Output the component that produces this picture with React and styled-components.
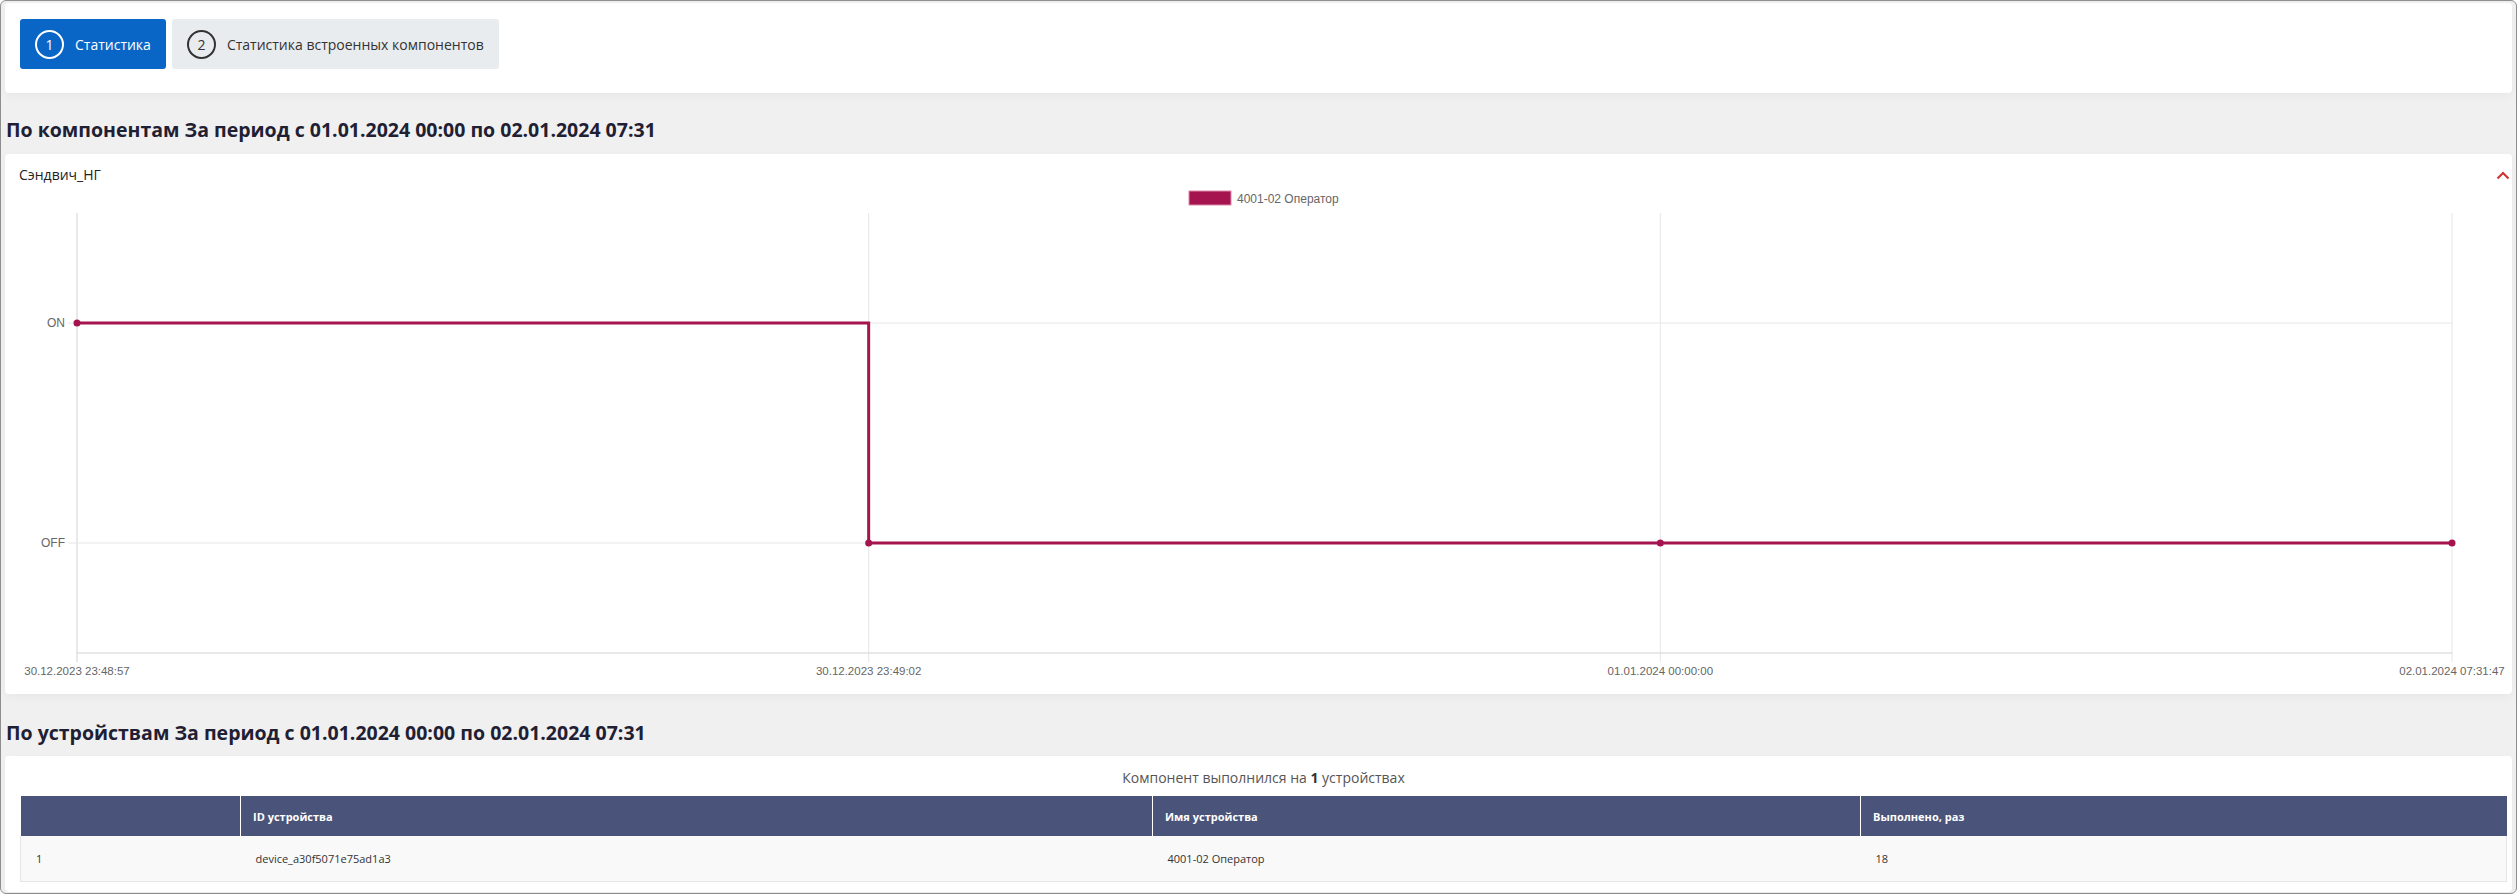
import styled, { createGlobalStyle } from "styled-components";

const GlobalStyle = createGlobalStyle`
    html, body {
        margin: 0;
        padding: 0;
        background: #ffffff;
    }
    body {
        font-family: "Open Sans", "Noto Sans", sans-serif;
    }
`

const palette = {
    blue: '#0a66c6',
    tabGray: '#e9ecef',
    bg: '#f0f0f0',
    line: '#a6144f',
    head: '#4a5379',
    grid: '#e6e6e6',
    axis: '#d2d2d2',
    tick: '#666666',
}

// рамка окна
const Frame = styled.div`
    width: 2517px;
    height: 894px;
    box-sizing: border-box;
    border: 1px solid #8e8e8e;
    border-radius: 6px;
    background: ${palette.bg};
    padding: 2px 4px 0 4px;
    display: flex;
    flex-direction: column;
    overflow: hidden;
`

const Card = styled.div`
    background: #ffffff;
    border-radius: 4px;
    box-shadow: 0 3px 10px rgba(0, 0, 0, 0.04);
`

const TopCard = styled(Card)`
    display: flex;
    gap: 6px;
    padding: 16px 15px 24px;
`

const Step = styled.div`
    display: flex;
    align-items: center;
    gap: 11px;
    height: 50px;
    box-sizing: border-box;
    padding: 0 15px;
    border-radius: 3px;
    font-size: 14px;
    background: ${p => p.active ? palette.blue : palette.tabGray};
    color: ${p => p.active ? '#ffffff' : '#333333'};
`

const StepNum = styled.span`
    width: 29px;
    height: 29px;
    box-sizing: border-box;
    border-radius: 50%;
    border: 2px solid ${p => p.active ? '#ffffff' : '#333333'};
    display: flex;
    align-items: center;
    justify-content: center;
    font-size: 14px;
`

const Heading = styled.h2`
    margin: 0;
    padding: ${p => p.top}px 1px ${p => p.bottom}px;
    font-size: 19.5px;
    line-height: 26px;
    font-weight: 700;
    color: #1f2033;
`

const ChartCard = styled(Card)`
    height: 540px;
    display: flex;
    flex-direction: column;
`

const ChartHead = styled.div`
    display: flex;
    align-items: center;
    justify-content: space-between;
    padding: 12px 2px 2px 14px;
    font-size: 14px;
    line-height: 18px;
    color: #222222;
`

const DeviceCard = styled(Card)`
    flex: 1;
    padding: 12px 5px 10px 15px;
    margin-bottom: 3px;
`

const Summary = styled.div`
    text-align: center;
    font-size: 14px;
    line-height: 20px;
    color: #555555;
    margin-bottom: 8px;
    b {
        font-weight: 700;
        color: #333333;
    }
`

const Table = styled.table`
    width: 100%;
    border-collapse: collapse;
    table-layout: fixed;
    font-size: 11px;
`

const Th = styled.th`
    height: 40px;
    padding: 0 12px;
    background: ${palette.head};
    color: #ffffff;
    font-weight: 700;
    text-align: left;
    border-left: 1px solid #ffffff;
    &:first-child {
        border-left: none;
    }
`

const Td = styled.td`
    height: 45px;
    padding: 0 15px;
    background: #f9f9f9;
    color: #333333;
    border-bottom: 1px solid ${palette.grid};
    &:first-child {
        border-left: 1px solid ${palette.grid};
    }
    &:last-child {
        border-right: 1px solid ${palette.grid};
    }
`

const labels = ['30.12.2023 23:48:57', '30.12.2023 23:49:02', '01.01.2024 00:00:00', '02.01.2024 07:31:47']
const values = [1, 0, 0, 0]

// график: координаты в пикселях svg
const X0 = 72
const X1 = 2447
const Y_ON = 137
const Y_OFF = 357
const TOP = 27
const BOTTOM = 467

const StateChart = () => {
    const step = (X1 - X0) / (labels.length - 1)
    const xs = labels.map((_, i) => X0 + step * i)
    const ys = values.map(v => v ? Y_ON : Y_OFF)
    let d = `M${xs[0]},${ys[0]}`
    for (let i = 1; i < xs.length; i++) {
        d += ` H${xs[i]} V${ys[i]}`
    }
    return (
        <svg width="2507" height="508" style={{ display: 'block' }}>
            <rect x="1184" y="5" width="42" height="14" fill={palette.line} stroke="#d98aa8" strokeWidth="1" />
            <text x="1232" y="16.5" fontSize="12" fill={palette.tick} fontFamily="Liberation Sans, Arial, sans-serif">4001-02 Оператор</text>

            {xs.map((x, i) => (
                <line key={'v' + i} x1={x} y1={TOP} x2={x} y2={BOTTOM + 9} stroke={i === 0 ? palette.axis : palette.grid} strokeWidth="1" />
            ))}
            {[Y_ON, Y_OFF].map(y => (
                <line key={'h' + y} x1={X0 - 9} y1={y} x2={X1} y2={y} stroke={palette.grid} strokeWidth="1" />
            ))}
            <line x1={X0} y1={BOTTOM} x2={X1} y2={BOTTOM} stroke={palette.axis} strokeWidth="1" />

            <text x="60" y={Y_ON + 4} fontSize="12" textAnchor="end" fill={palette.tick} fontFamily="Liberation Sans, Arial, sans-serif">ON</text>
            <text x="60" y={Y_OFF + 4} fontSize="12" textAnchor="end" fill={palette.tick} fontFamily="Liberation Sans, Arial, sans-serif">OFF</text>

            {labels.map((l, i) => (
                <text key={l} x={xs[i]} y="489" fontSize="11.5" textAnchor="middle" fill={palette.tick} fontFamily="Liberation Sans, Arial, sans-serif">{l}</text>
            ))}

            <path d={d} fill="none" stroke={palette.line} strokeWidth="3" />
            {xs.map((x, i) => (
                <circle key={'p' + i} cx={x} cy={ys[i]} r="3.5" fill={palette.line} />
            ))}
        </svg>
    )
}

const Chevron = () => (
    <svg width="14" height="9" viewBox="0 0 14 9">
        <polyline points="1.5,7.5 7,2 12.5,7.5" fill="none" stroke="#d0312d" strokeWidth="2" />
    </svg>
)

const App = () => {
    return (
        <>
            <GlobalStyle />
            <Frame>
                <TopCard>
                    <Step active>
                        <StepNum active>1</StepNum>
                        Статистика
                    </Step>
                    <Step>
                        <StepNum>2</StepNum>
                        Статистика встроенных компонентов
                    </Step>
                </TopCard>

                <Heading top={24} bottom={11}>По компонентам За период с 01.01.2024 00:00 по 02.01.2024 07:31</Heading>
                <ChartCard>
                    <ChartHead>
                        <span>Сэндвич_НГ</span>
                        <Chevron />
                    </ChartHead>
                    <StateChart />
                </ChartCard>

                <Heading top={26} bottom={10}>По устройствам За период с 01.01.2024 00:00 по 02.01.2024 07:31</Heading>
                <DeviceCard>
                    <Summary>Компонент выполнился на <b>1</b> устройствах</Summary>
                    <Table>
                        <colgroup>
                            <col style={{ width: 220 }} />
                            <col style={{ width: 912 }} />
                            <col style={{ width: 708 }} />
                            <col />
                        </colgroup>
                        <thead>
                            <tr>
                                <Th></Th>
                                <Th>ID устройства</Th>
                                <Th>Имя устройства</Th>
                                <Th>Выполнено, раз</Th>
                            </tr>
                        </thead>
                        <tbody>
                            <tr>
                                <Td>1</Td>
                                <Td>device_a30f5071e75ad1a3</Td>
                                <Td>4001-02 Оператор</Td>
                                <Td>18</Td>
                            </tr>
                        </tbody>
                    </Table>
                </DeviceCard>
            </Frame>
        </>
    );
};

export default App;
